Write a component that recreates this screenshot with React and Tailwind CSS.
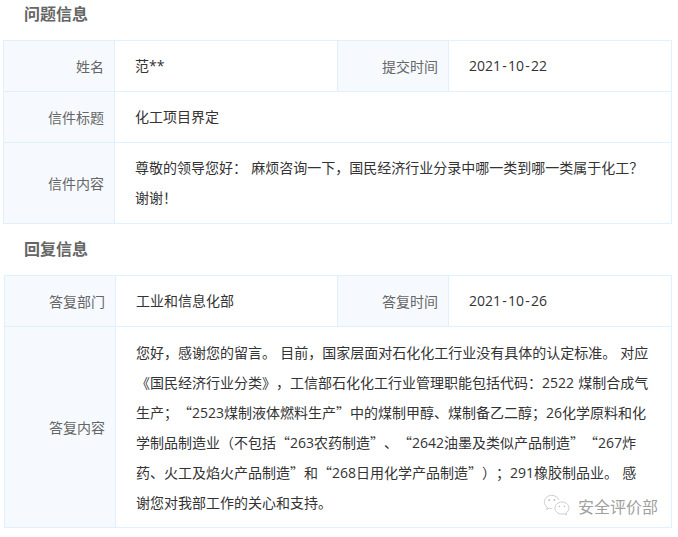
import React from 'react';

// 数字和字母用西文字体，其余（含弯引号）走 CJK 字体
const Rich = ({ text }) =>
  text.split(/([0-9A-Za-z*-]+)/).map((part, i) =>
    i % 2 === 1 ? (
      <span key={i} className="font-['Open_Sans']">{part}</span>
    ) : (
      <span key={i}>{part}</span>
    )
  );

const DateText = ({ parts }) => (
  <span className="font-['Open_Sans']">
    {parts[0]}<span className="px-[1.25px]">-</span>{parts[1]}<span className="px-[1.25px]">-</span>{parts[2]}
  </span>
);

const Label = ({ children }) => (
  <div className="flex items-center justify-end bg-[#f6faff] pr-[10px] text-[14px] text-[#666666]">
    {children}
  </div>
);

const Value = ({ children, className = 'pb-[2px]' }) => (
  <div className={`flex items-center bg-white pl-[20px] text-[14px] text-[#333333] [word-spacing:1px] ${className}`}>
    {children}
  </div>
);

const WechatMark = () => (
  <svg width="28" height="26" viewBox="0 0 30 26" fill="none" stroke="#b4b4b4" strokeWidth="0.7">
    <path d="M17 6.5C15.8 3.6 12.8 1.6 9.5 1.6 5 1.6 1.4 4.8 1.4 8.7c0 2.3 1.2 4.3 3.2 5.6l-.7 2.4 2.8-1.4c.9.3 1.8.4 2.8.4" />
    <path d="M27.8 15.2c0-3.6-3.4-6.5-7.5-6.5s-7.5 2.9-7.5 6.5 3.4 6.5 7.5 6.5c.9 0 1.7-.1 2.5-.4l2.3 1.3-.6-2.1c2.1-1.2 3.3-3.1 3.3-5.3Z" />
    <circle cx="6.6" cy="6.6" r="0.9" fill="#a8a8a8" stroke="none" />
    <circle cx="12.2" cy="6.6" r="0.9" fill="#a8a8a8" stroke="none" />
    <circle cx="17.6" cy="13.4" r="0.8" fill="#a8a8a8" stroke="none" />
    <circle cx="23" cy="13.4" r="0.8" fill="#a8a8a8" stroke="none" />
  </svg>
);

const App = () => {
  const question = ['尊敬的领导您好： 麻烦咨询一下，国民经济行业分录中哪一类到哪一类属于化工？', '谢谢！'];
  const answer = [
    '您好，感谢您的留言。 目前，国家层面对石化化工行业没有具体的认定标准。 对应',
    '《国民经济行业分类》，工信部石化化工行业管理职能包括代码：2522 煤制合成气',
    '生产；“2523煤制液体燃料生产”中的煤制甲醇、煤制备乙二醇；26化学原料和化',
    '学制品制造业（不包括“263农药制造”、“2642油墨及类似产品制造”“267炸',
    '药、火工及焰火产品制造”和“268日用化学产品制造”）；291橡胶制品业。 感',
    '谢您对我部工作的关心和支持。',
  ];

  return (
    <div
      lang="zh-CN"
      className="relative h-[537px] w-[678px] overflow-hidden bg-white font-['Noto_Sans_CJK_SC',sans-serif] [text-spacing-trim:space-all]"
    >
      {/* 问题信息 */}
      <h2 className="ml-[24px] h-[40px] pt-[1px] text-[16px] leading-[24px] font-bold text-[#666666]">问题信息</h2>
      <div className="ml-[3px] grid w-[669px] grid-cols-[110px_222px_110px_1fr] grid-rows-[50px_50px_80px] gap-px border border-[#e1f0fd] bg-[#e1f0fd]">
        <Label>姓名</Label>
        <Value><Rich text="范**" /></Value>
        <Label>提交时间</Label>
        <Value><DateText parts={['2021', '10', '22']} /></Value>
        <Label>信件标题</Label>
        <Value className="col-span-3 pb-[2px]">化工项目界定</Value>
        <Label>信件内容</Label>
        <Value className="col-span-3 pb-[2px]">
          <div className="leading-[30px] whitespace-nowrap">
            {question.map((line) => <div key={line}>{line}</div>)}
          </div>
        </Value>
      </div>

      {/* 回复信息 */}
      <h2 className="mt-[12px] ml-[24px] h-[39px] text-[16px] leading-[24px] font-bold text-[#666666]">回复信息</h2>
      <div className="ml-[4px] grid w-[668px] grid-cols-[110px_221px_110px_1fr] grid-rows-[50px_200px] gap-px border border-[#e1f0fd] bg-[#e1f0fd]">
        <Label>答复部门</Label>
        <Value>工业和信息化部</Value>
        <Label>答复时间</Label>
        <Value><DateText parts={['2021', '10', '26']} /></Value>
        <Label>答复内容</Label>
        <Value className="col-span-3">
          <div className="leading-[30px] whitespace-nowrap">
            {answer.map((line) => <div key={line} className="h-[30px]"><Rich text={line} /></div>)}
          </div>
        </Value>
      </div>

      {/* 公众号水印 */}
      <div className="absolute top-[493px] left-[543px] flex items-center gap-[7px] text-[16px] text-[#a0a0a0]">
        <WechatMark />
        <span>安全评价部</span>
      </div>
    </div>
  );
};

export default App;
